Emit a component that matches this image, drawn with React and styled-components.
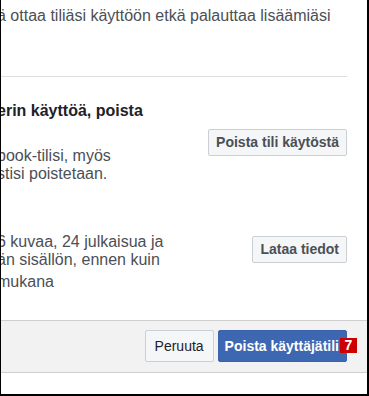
import React from 'react'
import styled, { createGlobalStyle } from 'styled-components';

// Styles
const GlobalStyle = createGlobalStyle`
    html, body{
        margin:0;
        padding:0;
        background:#fff;
    }
    body{
        font-family:"Liberation Sans", Arial, Helvetica, sans-serif;
    }
`;

const Frame = styled.div`
    width:369px;
    height:396px;
    box-sizing:border-box;
    border-left:1px solid #000;
    border-right:2px solid #000;
    border-bottom:2px solid #000;
    background:#fff;
    overflow:hidden;
    display:flex;
    flex-direction:column;
`;

// the dialog is cut on its left side, so the body starts a little off screen
const Body = styled.div`
    margin-left:-4px;
    padding-right:20px;
`;

const Text = styled.p`
    margin:${p => p.$top || 0}px 0 0;
    font-size:16px;
    line-height:18px;
    color:#4b4f56;
    white-space:nowrap;
`;

const Rule = styled.hr`
    margin:51px 0 0;
    height:0;
    border:0;
    border-top:1px solid #dddfe2;
`;

const Section = styled.div`
    display:flex;
    justify-content:space-between;
    align-items:flex-start;
    margin-top:${p => p.$top}px;
`;

const Heading = styled.h3`
    margin:0;
    font-size:16px;
    line-height:18px;
    font-weight:bold;
    color:#1d2129;
    white-space:nowrap;
`;

const GrayButton = styled.button`
    flex:none;
    margin-top:${p => p.$top}px;
    height:27px;
    padding:0 7px;
    border:1px solid #ccd0d5;
    border-radius:2px;
    background:#f5f6f7;
    color:#4b4f56;
    font-family:inherit;
    font-size:14px;
    font-weight:bold;
    line-height:25px;
    white-space:nowrap;
`;

const Footer = styled.div`
    margin-top:29px;
    display:flex;
    justify-content:flex-end;
    gap:4px;
    padding:9px 20px 10px;
    background:#f2f2f2;
    border-top:1px solid #cfcfcf;
    border-bottom:1px solid #cfcfcf;
`;

const FooterButton = styled.button`
    position:relative;
    height:32px;
    padding:${p => p.$primary ? '0 7px 0 6px' : '0 9px'};
    border:1px solid ${p => p.$primary ? '#3b62ad' : '#ccd0d5'};
    border-radius:2px;
    background:${p => p.$primary ? '#3e67b1' : '#f5f6f7'};
    color:${p => p.$primary ? '#fff' : '#1d2129'};
    font-family:inherit;
    font-size:14px;
    font-weight:${p => p.$primary ? 'bold' : 'normal'};
    line-height:30px;
    white-space:nowrap;
`;

const Badge = styled.span`
    position:absolute;
    top:7px;
    right:-11px;
    width:17px;
    height:15px;
    background:#c00;
    color:#fff;
    font-size:14px;
    font-weight:bold;
    line-height:15px;
    text-align:center;
`;

const App = () => {
    return (
        <Frame>
            <GlobalStyle />
            <Body>
                <Text $top={-17}>jälkeen et pysty käyttämään Messengeriä, et voi, etkä</Text>
                <Text $top={6}>ä ottaa tiliäsi käyttöön etkä palauttaa lisäämiäsi</Text>
                <Rule />
                <Section $top={25}>
                    <div>
                        <Heading>erin käyttöä, poista</Heading>
                        <Text $top={27}>
                            book-tilisi, myös
                            <br />
                            stisi poistetaan.
                        </Text>
                    </div>
                    <GrayButton $top={27}>Poista tili käytöstä</GrayButton>
                </Section>
                <Section $top={4}>
                    <div>
                        <Heading>&nbsp;</Heading>
                        <Text $top={28}>
                            6 kuvaa, 24 julkaisua ja
                            <br />
                            än sisällön, ennen kuin
                        </Text>
                        <Text $top={4}>mukana</Text>
                    </div>
                    <GrayButton $top={49}>Lataa tiedot</GrayButton>
                </Section>
            </Body>
            <Footer>
                <FooterButton>Peruuta</FooterButton>
                <FooterButton $primary>
                    Poista käyttäjätili
                    <Badge>7</Badge>
                </FooterButton>
            </Footer>
        </Frame>
    )
}

export default App
